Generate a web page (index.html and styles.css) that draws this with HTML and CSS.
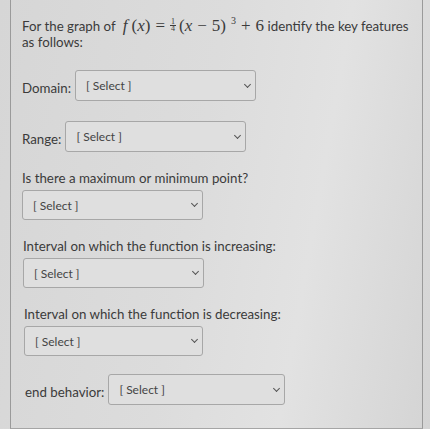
FILE: index.html
```html
<!DOCTYPE html>
<html lang="en">
  <head>
    <meta charset="utf-8" />
    <meta name="viewport" content="width=device-width, initial-scale=1.0" />
    <title>Key Features Quiz</title>
    <link rel="stylesheet" href="styles.css">
  </head>
  <body>
    <div class="question">
      <p class="prompt">
        For the graph of
        <span class="math"><i>f</i><span class="paren">(<i>x</i>)</span><span class="op">=</span><span class="frac"><span>1</span><span>4</span></span>(<i>x</i><span class="op">&minus;</span>5)<sup>3</sup><span class="op">+</span>6</span>
        identify the key features as follows:
      </p>

      <div class="row row-domain">
        <label>Domain:</label>
        <div class="select"><span>[ Select ]</span><span class="chev"></span></div>
      </div>

      <div class="row row-range">
        <label>Range:</label>
        <div class="select"><span>[ Select ]</span><span class="chev"></span></div>
      </div>

      <div class="block block-extrema">
        <label>Is there a maximum or minimum point?</label>
        <div class="select"><span>[ Select ]</span><span class="chev"></span></div>
      </div>

      <div class="block block-inc">
        <label>Interval on which the function is increasing:</label>
        <div class="select"><span>[ Select ]</span><span class="chev"></span></div>
      </div>

      <div class="block block-dec">
        <label>Interval on which the function is decreasing:</label>
        <div class="select"><span>[ Select ]</span><span class="chev"></span></div>
      </div>

      <div class="row row-end">
        <label>end behavior:</label>
        <div class="select"><span>[ Select ]</span><span class="chev"></span></div>
      </div>
    </div>
  </body>
</html>
```

FILE: styles.css
```css
/* General Reset */
* {
  margin: 0;
  padding: 0;
  box-sizing: border-box;
}

html, body {
  height: 100%;
  font-family: Lato, "Open Sans", Arial, sans-serif;
  color: #3b3b3b;
  background: linear-gradient(100deg, #d6d6d6 0%, #dcdcdc 45%, #e2e2e2 70%, #d4d4d4 100%);
  overflow: hidden;
}

/* Question card */
.question {
  margin-left: 10px;
  width: 413px;
  height: 429px;
  border-left: 1px solid #9a9a9a;
  border-right: 1px solid #9a9a9a;
  border-bottom: 1px solid #a5a5a5;
  padding: 18px 12px 0 11px;
  font-size: 13.3px;
}

.prompt {
  line-height: 16px;
  width: 392px;
}

/* Formula */
.math {
  font-family: "Liberation Serif", "DejaVu Serif", serif;
  font-size: 17px;
  line-height: 0;
  margin-left: 4px;
}

.math i {
  font-style: italic;
}

.paren {
  margin-left: 4px;
}

.op {
  margin: 0 5px;
}

.frac {
  display: inline-block;
  font-size: 8px;
  line-height: 6px;
  text-align: center;
  margin-right: 3px;
}

.frac span {
  display: block;
  padding: 0 1px;
}

.frac span:first-child {
  border-bottom: 1px solid #3b3b3b;
}

.math sup {
  font-size: 10px;
  line-height: 0;
  margin-left: 5px;
}

/* Select boxes */
.select {
  width: 181px;
  height: 31px;
  border: 1px solid #a7a7a7;
  border-radius: 3px;
  background-color: #dfdfdf;
  display: flex;
  justify-content: space-between;
  align-items: center;
  padding: 0 5px 0 10px;
  font-size: 12px;
  color: #444;
}

.chev {
  width: 5px;
  height: 5px;
  border-right: 1.5px solid #555;
  border-bottom: 1.5px solid #555;
  transform: rotate(45deg);
  margin-top: -3px;
}

/* Inline label + select */
.row {
  display: flex;
  align-items: center;
  gap: 4px;
}

.row label {
  padding-top: 4px;
}

.row-domain {
  margin-top: 20px;
}

.row-range {
  margin-top: 20px;
}

.row-end {
  margin-top: 18px;
  padding-left: 3px;
}

.row-end .select {
  width: 177px;
}

/* Label above select */
.block label {
  display: block;
  line-height: 16px;
  margin-bottom: 4px;
}

.block .select {
  height: 30px;
}

.block-extrema {
  margin-top: 18px;
}

.block-inc {
  margin-top: 18px;
  padding-left: 1px;
}

.block-dec {
  margin-top: 18px;
  padding-left: 2px;
}

.block-dec .select {
  width: 179px;
}
```
